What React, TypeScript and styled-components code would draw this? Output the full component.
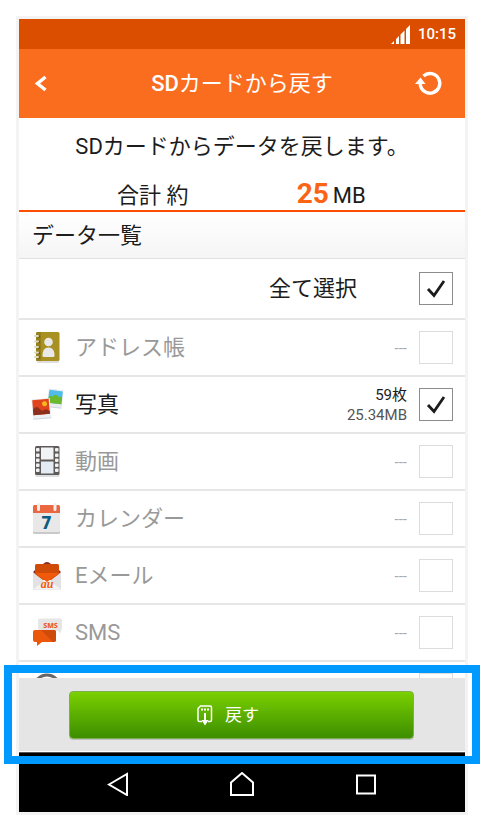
import React, { useState } from "react";
import styled, { createGlobalStyle } from "styled-components";

const GlobalStyle = createGlobalStyle`
  *, *::before, *::after { box-sizing: border-box; }
  body {
    margin: 0;
    background: #fff;
    color: #1c1c1c;
    font-family: Roboto, "Noto Sans CJK JP", sans-serif;
    font-size: 22px;
  }
  button { font: inherit; border: 0; background: none; padding: 0; cursor: pointer; }
  svg { display: block; }
`;

const Page = styled.main`
  display: flex;
  height: 100vh;
  min-height: 600px;
  padding: 16px;
`;

const Phone = styled.div`
  flex: 1;
  display: flex;
  flex-direction: column;
  min-width: 0;
  border: 3px solid #f3f3f3;
`;

const StatusBar = styled.div`
  display: flex;
  align-items: center;
  justify-content: flex-end;
  gap: 8px;
  height: 30px;
  padding-right: 9px;
  background: #db4e00;
  color: #fff;
  font-size: 15px;
  font-weight: 500;
`;

const AppBar = styled.header`
  display: grid;
  grid-template-columns: 48px 1fr 48px;
  align-items: center;
  height: 69px;
  padding: 0 12px;
  background: #fa6c1e;
  color: #fff;
`;

const Title = styled.h1`
  margin: 0;
  font-size: 22px;
  font-weight: 400;
  line-height: 34px;
  text-align: center;
`;

const Medium = styled.span`
  font-weight: 500;
`;

const IconButton = styled.button<{ $end?: boolean }>`
  display: flex;
  align-items: center;
  justify-content: ${(p) => (p.$end ? "flex-end" : "flex-start")};
  height: 48px;
  padding: 0 ${(p) => (p.$end ? "10px" : "0")} 0 0;
  color: inherit;
`;

const NavButton = styled.button`
  color: inherit;
`;

const Summary = styled.section`
  padding-top: 12px;
  border-bottom: 2px solid #ff4e00;
  text-align: center;
`;

const Lead = styled.p`
  margin: 0;
  line-height: 34px;
`;

const Total = styled.div`
  display: grid;
  grid-template-columns: 1fr 1fr;
  align-items: baseline;
  height: 46px;
  padding: 0 10%;
  line-height: 60px;
`;

const Amount = styled.strong`
  margin-right: 4px;
  color: #fa6414;
  font-size: 28px;
  font-weight: 700;
`;

const SectionTitle = styled.h2`
  margin: 0;
  padding: 1px 13px 0;
  border-bottom: 1px solid #e0e0e0;
  background: linear-gradient(#fff, #f5f5f5);
  font-size: 22px;
  font-weight: 400;
  line-height: 45px;
`;

const List = styled.ul`
  flex: 1;
  min-height: 0;
  margin: 0;
  padding: 0;
  overflow: hidden;
  list-style: none;
`;

const Row = styled.label<{ $tall?: boolean; $muted?: boolean }>`
  display: flex;
  align-items: center;
  gap: 12px;
  height: ${(p) => (p.$tall ? "61px" : "57px")};
  padding: 0 12px;
  border-bottom: 2px solid #e6e6e6;
  color: ${(p) => (p.$muted ? "#999" : "#1c1c1c")};
  line-height: 34px;
`;

const Name = styled.span`
  flex: 1;
  white-space: nowrap;
`;

const AllLabel = styled.span`
  flex: 1;
  padding-right: 50px;
  text-align: right;
`;

const Detail = styled.span`
  display: grid;
  color: #555;
  font-size: 15px;
  line-height: 20px;
  text-align: right;
`;

const Count = styled.span`
  color: #1c1c1c;
`;

const None = styled.span`
  color: #aaa;
`;

const CheckBox = styled.span`
  display: grid;
  place-items: center;
  flex: none;
  > * { grid-area: 1 / 1; }
  > svg { z-index: 1; pointer-events: none; }
`;

const CheckInput = styled.input<{ $strong: boolean }>`
  appearance: none;
  width: 34px;
  height: 33px;
  margin: 0;
  border: ${(p) => (p.$strong ? "1px solid #8c8c8c" : "1px solid #dcdcdc")};
  background: #fff;
`;

const Footer = styled.footer`
  position: relative;
  padding: 13px 51px 12px 50px;
  border-bottom: 1px solid #fff;
  background: #e5e5e5;
`;

const Highlight = styled.div`
  position: absolute;
  inset: -13px -15px;
  border: 8px solid #0099ff;
  pointer-events: none;
`;

const RestoreButton = styled.button`
  display: flex;
  align-items: center;
  justify-content: center;
  gap: 12px;
  width: 100%;
  height: 48px;
  && {
    padding-right: 27px;
    border: 1px solid #7fae4e;
    border-radius: 4px;
    background: linear-gradient(#7bd000, #3c8e00);
  }
  box-shadow: 0 1px 0 #c0c0c0;
  color: #fff;
  font-size: 17px;
  line-height: 24px;
`;

const NavBar = styled.nav`
  display: flex;
  justify-content: center;
  gap: 100px;
  padding: 19px 0 16px;
  border-top: 1px solid #555;
  background: #000;
  color: #fff;
`;

const Glyph = ({ children, width = 32, height = 33 }: { children: React.ReactNode; width?: number; height?: number }) => (
  <svg width={width} height={height} viewBox={`0 0 ${width} ${height}`} fill="none" aria-hidden="true">
    {children}
  </svg>
);

const AddressIcon = () => (
  <Glyph>
    <rect x="6" y="3" width="22" height="29" rx="1.5" fill="#dedede" />
    <rect x="5" y="1" width="23.5" height="29" rx="1.5" fill="#a89122" />
    <path d="M5 2.500Q5 1 6.500 1H10v29H6.500Q5 30 5 28.500z" fill="#96801a" />
    {[5, 10.5, 16, 21.5, 26].map((y) => (
      <g key={y}>
        <circle cx="8" cy={y + 0.5} r="1.2" fill="#6f5f10" />
        <path d={`M4 ${y}H7`} stroke="#dcd9c4" strokeWidth="2" strokeLinecap="round" />
      </g>
    ))}
    <circle cx="17.500" cy="11" r="4.300" fill="#e9e9ea" />
    <path d="M11.500 24.500c0-5 2-8 6-8s6 3 6 8q0 1.500-1.500 1.500h-9q-1.500 0-1.500-1.500z" fill="#e9e9ea" />
  </Glyph>
);

const PhotoIcon = () => (
  <Glyph>
    <g transform="rotate(7 24 10)">
      <rect x="17" y="1.500" width="14.500" height="18.500" fill="#cdd5da" />
      <rect x="17" y="1.500" width="14.500" height="17.500" fill="#e9edf0" />
      <rect x="17.500" y="2.500" width="13.500" height="13" fill="#50bce8" />
      <path d="M17.500 10q2-3 4-1 1-3 4-2 2 0 2 2 2-2 3.500 0v6.500h-13.500z" fill="#6cb92d" />
    </g>
    <g transform="rotate(-5 10 21)">
      <rect x="1.500" y="11" width="18" height="20" fill="#ccd7de" />
      <rect x="1.500" y="11" width="18" height="19" fill="#edf1f4" />
      <rect x="2" y="11.500" width="16.500" height="15" fill="#e0441e" />
      <path d="M2 21q3-4 6-1l3 3 2-1q3-1 5.500 2v2.500H2z" fill="#8c2f1b" />
      <circle cx="14" cy="16" r="2.500" fill="#f6b51f" />
    </g>
  </Glyph>
);

const FilmIcon = () => (
  <Glyph>
    <rect x="4.500" y="29" width="24" height="3" rx="1" fill="#dedede" />
    <rect x="4" y="1" width="24.500" height="29" rx="1.500" fill="#5e5a59" />
    <rect x="10" y="2.500" width="12.500" height="12" fill="#f1f3f4" />
    <rect x="10" y="16.500" width="12.500" height="12" fill="#e2ecf2" />
    {[3, 8.5, 13.5, 18.5, 23.5].map((y) => (
      <g key={y} fill="#f1f1f1">
        <rect x="5" y={y} width="3.500" height="3.600" rx="0.800" />
        <rect x="24" y={y} width="3.500" height="3.600" rx="0.800" />
      </g>
    ))}
  </Glyph>
);

const CalendarIcon = () => (
  <Glyph>
    <rect x="2" y="6" width="27" height="26" rx="1.500" fill="#c9c9c9" />
    <rect x="2" y="3" width="27" height="27" rx="1.500" fill="#e8e8e8" />
    <path d="M2 11V4.500Q2 3 3.500 3h24Q29 3 29 4.500V11z" fill="#ea6740" />
    <path d="M7.500 2.500v5M24 2.500v5" stroke="#f0eeee" strokeWidth="3" strokeLinecap="round" />
    <text x="15.500" y="27" textAnchor="middle" fontFamily="Noto Sans, sans-serif" fontSize="17" fontWeight="800" fill="#0b5a80">7</text>
  </Glyph>
);

const MailIcon = () => (
  <Glyph>
    <path d="M12 5l2-1.500q2-1 4 0L20 5zM2 13l3-3v6zM30 13l-3-3v6z" fill="#8a2a22" />
    <rect x="4" y="5" width="24" height="16" rx="1.500" fill="#cf4b06" />
    <path d="M2 13.500L16 24l14-10.500V29.500q0 1.500-1.500 1.500h-25Q2 31 2 29.500z" fill="#e2e2e4" />
    <path d="M2 30.500L16 20l14 10.500z" fill="#f4f4f5" />
    <path d="M4 14h24L16 23z" fill="#f05a0a" />
    <text x="16" y="29" textAnchor="middle" fontFamily="Liberation Serif, serif" fontStyle="italic" fontWeight="700" fontSize="12" fill="#f05a0a">au</text>
  </Glyph>
);

const SmsIcon = () => (
  <Glyph>
    <path d="M9 2.500h20q2 0 2 2v8q0 2-1 2v3l-4-3H9q-2 0-2-2v-8q0-2 2-2z" fill="#e6e6e7" />
    <text x="19.500" y="12" textAnchor="middle" fontFamily="Noto Sans, sans-serif" fontWeight="800" fontSize="7" fill="#ea5a1c">SMS</text>
    <path d="M4 14h19q2 0 2 2v8q0 2-2 2H11l-5 4v-4H4q-2 0-2-2v-8q0-2 2-2z" fill="#eb570b" />
    <path d="M10 14h13q2 0 2 2v8q0 2-2 2h-1z" fill="#cf4b0b" />
  </Glyph>
);

const RingIcon = () => (
  <Glyph>
    <circle cx="16" cy="15" r="13" stroke="#666" strokeWidth="3" />
  </Glyph>
);

type Item = { id: string; name: string; icon: React.ReactNode; count?: string; size?: string };

const ITEMS: Item[] = [
  { id: "address", name: "アドレス帳", icon: <AddressIcon /> },
  { id: "photo", name: "写真", icon: <PhotoIcon />, count: "59枚", size: "25.34MB" },
  { id: "video", name: "動画", icon: <FilmIcon /> },
  { id: "calendar", name: "カレンダー", icon: <CalendarIcon /> },
  { id: "mail", name: "Eメール", icon: <MailIcon /> },
  { id: "sms", name: "SMS", icon: <SmsIcon /> },
  { id: "more", name: "", icon: <RingIcon /> },
];

const Check = ({ enabled, checked, onToggle }: { enabled: boolean; checked: boolean; onToggle: () => void }) => (
  <CheckBox>
    <CheckInput type="checkbox" $strong={enabled} disabled={!enabled} checked={checked} onChange={onToggle} />
    {checked && (
      <Glyph width={20} height={19}>
        <path d="M2 10l6 6.500L18 2" stroke="#1c1c1c" strokeWidth="2.800" />
      </Glyph>
    )}
  </CheckBox>
);

export default function App() {
  const [checked, setChecked] = useState(true);
  const toggle = () => setChecked((value) => !value);

  return (
    <>
      <GlobalStyle />
      <Page>
        <Phone>
          <StatusBar>
            <Glyph width={20} height={19}>
              <path d="M1 19l3-3v3zM6 19v-5l3-3v8zM10.500 19V9.500l4-4V19zM16 19V4l4-4v19z" fill="#fff" />
            </Glyph>
            <span>10:15</span>
          </StatusBar>
          <AppBar>
            <IconButton aria-label="戻る">
              <Glyph width={20} height={20}>
                <path d="M14.500 3L6.500 9.500l8 6.500" stroke="currentColor" strokeWidth="3.500" />
              </Glyph>
            </IconButton>
            <Title><Medium>SD</Medium>カードから戻す</Title>
            <IconButton aria-label="更新" $end>
              <Glyph width={28} height={26}>
                <path d="M8.500 5A9.800 9.800 0 1 1 5.200 12.500" stroke="currentColor" strokeWidth="3.400" />
                <path d="M0 13L5.500 6.500l5 6.500z" fill="currentColor" />
              </Glyph>
            </IconButton>
          </AppBar>
          <Summary>
            <Lead>SDカードからデータを戻します。</Lead>
            <Total>
              <span>合計 約</span>
              <span><Amount>25</Amount>MB</span>
            </Total>
          </Summary>
          <SectionTitle>データ一覧</SectionTitle>
          <Row $tall>
            <AllLabel>全て選択</AllLabel>
            <Check enabled checked={checked} onToggle={toggle} />
          </Row>
          <List>
            {ITEMS.map((item) => (
              <li key={item.id}>
                <Row $muted={!item.count}>
                  {item.icon}
                  <Name>{item.name}</Name>
                  {item.name && (
                    <Detail>
                      {item.count ? (
                        <>
                          <Count>{item.count}</Count>
                          <span>{item.size}</span>
                        </>
                      ) : (
                        <None>---</None>
                      )}
                    </Detail>
                  )}
                  <Check enabled={!!item.count} checked={!!item.count && checked} onToggle={toggle} />
                </Row>
              </li>
            ))}
          </List>
          <Footer>
            <RestoreButton>
              <Glyph width={16} height={21}>
                <path d="M5 16.500H2.500Q1 16.500 1 15V3.500L3.500 1H13q1.500 0 1.500 1.500V15q0 1.500-1.500 1.500h-2" stroke="#fff" strokeWidth="1.500" />
                <path d="M4 4.500h2M7 4.500h2M10 4.500h2" stroke="#fff" strokeWidth="2" />
                <path d="M7 8h2v7h2.500L8 20.500 4.500 15H7z" fill="#fff" />
              </Glyph>
              <span>戻す</span>
            </RestoreButton>
            <Highlight />
          </Footer>
          <NavBar>
            <NavButton aria-label="前へ">
              <Glyph width={24} height={24}>
                <path d="M3 12.500L21 2v21z" stroke="currentColor" strokeWidth="2" />
              </Glyph>
            </NavButton>
            <NavButton aria-label="ホーム">
              <Glyph width={24} height={24}>
                <path d="M1 23V10.500L12 1l11 9.500V23z" stroke="currentColor" strokeWidth="2" />
              </Glyph>
            </NavButton>
            <NavButton aria-label="履歴">
              <Glyph width={24} height={24}>
                <rect x="3" y="3.500" width="18" height="18" stroke="currentColor" strokeWidth="2" />
              </Glyph>
            </NavButton>
          </NavBar>
        </Phone>
      </Page>
    </>
  );
}
